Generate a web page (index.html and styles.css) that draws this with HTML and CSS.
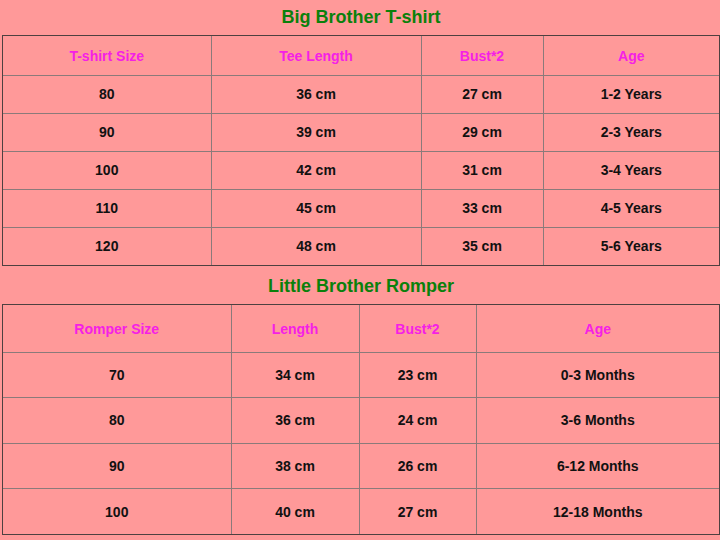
FILE: index.html
```html
<!DOCTYPE html>
<html>
<head>
<meta charset="utf-8">
<link rel="stylesheet" href="styles.css">
</head>
<body>
<div class="page">
  <h2 class="title t1">Big Brother T-shirt</h2>
  <div class="frame">
    <table class="chart c1">
      <colgroup><col class="a"><col class="b"><col class="c"><col class="d"></colgroup>
      <tr class="head"><th>T-shirt Size</th><th>Tee Length</th><th>Bust*2</th><th>Age</th></tr>
      <tr><td>80</td><td>36 cm</td><td>27 cm</td><td>1-2 Years</td></tr>
      <tr><td>90</td><td>39 cm</td><td>29 cm</td><td>2-3 Years</td></tr>
      <tr><td>100</td><td>42 cm</td><td>31 cm</td><td>3-4 Years</td></tr>
      <tr><td>110</td><td>45 cm</td><td>33 cm</td><td>4-5 Years</td></tr>
      <tr><td>120</td><td>48 cm</td><td>35 cm</td><td>5-6 Years</td></tr>
    </table>
  </div>
  <h2 class="title t2">Little Brother Romper</h2>
  <div class="frame">
    <table class="chart c2">
      <colgroup><col class="a"><col class="b"><col class="c"><col class="d"></colgroup>
      <tr class="head"><th>Romper Size</th><th>Length</th><th>Bust*2</th><th>Age</th></tr>
      <tr><td>70</td><td>34 cm</td><td>23 cm</td><td>0-3 Months</td></tr>
      <tr><td>80</td><td>36 cm</td><td>24 cm</td><td>3-6 Months</td></tr>
      <tr><td>90</td><td>38 cm</td><td>26 cm</td><td>6-12 Months</td></tr>
      <tr><td>100</td><td>40 cm</td><td>27 cm</td><td>12-18 Months</td></tr>
    </table>
  </div>
</div>
</body>
</html>
```
FILE: styles.css
```css
html, body {
  margin: 0;
  padding: 0;
  background: #ff9999;
}
.page {
  width: 718px;
  padding: 0 0 0 2px;
  font-family: "Liberation Sans", Arial, sans-serif;
}
.title {
  margin: 0;
  text-align: center;
  color: #0b800b;
  font-size: 18px;
  font-weight: bold;
}
.t1 { height: 35px; line-height: 35px; }
.t2 { height: 38px; line-height: 41px; }
.frame {
  border: 1px solid #4e4040;
  width: 716px;
}
.chart {
  width: 716px;
  border-collapse: collapse;
  table-layout: fixed;
}
.chart th, .chart td {
  border: 1px solid #8b7a7a;
  text-align: center;
  font-size: 14px;
  font-weight: bold;
  padding: 0;
  color: #111;
}
.chart tr:first-child th { border-top: 0; }
.chart tr:last-child td { border-bottom: 0; }
.chart th:first-child, .chart td:first-child { border-left: 0; }
.chart th:last-child, .chart td:last-child { border-right: 0; }
.chart th { color: #f520e6; padding-top: 2px; }
.c1 tr { height: 38px; }
.c1 tr.head { height: 39px; }
.c1 col.a { width: 208px; }
.c1 col.b { width: 210px; }
.c1 col.c { width: 122px; }
.c2 tr { height: 45.5px; }
.c2 tr.head { height: 47px; }
.c2 col.a { width: 228px; }
.c2 col.b { width: 128px; }
.c2 col.c { width: 117px; }
```
